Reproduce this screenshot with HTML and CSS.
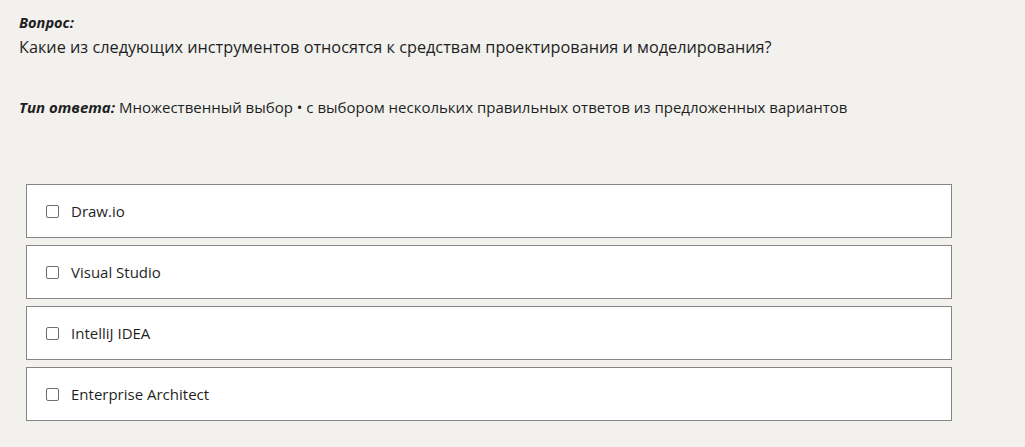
FILE: index.html
```html
<!DOCTYPE html>
<html lang="ru">
<head>
<meta charset="utf-8">
<link rel="stylesheet" href="styles.css">
</head>
<body>
<div class="page">
  <div class="label">Вопрос:</div>
  <div class="question">Какие из следующих инструментов относятся к средствам проектирования и моделирования?</div>
  <div class="type"><span class="type-label">Тип ответа:</span> Множественный выбор • с выбором нескольких правильных ответов из предложенных вариантов</div>
  <div class="options">
    <label class="option"><span class="box"></span><span class="opt-text">Draw.io</span></label>
    <label class="option"><span class="box"></span><span class="opt-text">Visual Studio</span></label>
    <label class="option"><span class="box"></span><span class="opt-text">IntelliJ IDEA</span></label>
    <label class="option"><span class="box"></span><span class="opt-text">Enterprise Architect</span></label>
  </div>
</div>
</body>
</html>
```
FILE: styles.css
```css
html, body {
  margin: 0;
  padding: 0;
  background: #f2f1ee;
}
body {
  font-family: "Open Sans", "Noto Sans", sans-serif;
  color: #1f1f1f;
}
.page {
  padding: 11px 19px 0 19px;
}
.label {
  font-weight: 700;
  font-style: italic;
  font-size: 14.6px;
  line-height: 22px;
}
.question {
  font-size: 16.25px;
  line-height: 26px;
  margin-top: 1px;
}
.type {
  font-size: 15px;
  line-height: 22px;
  margin-top: 36px;
}
.type-label {
  font-weight: 700;
  font-style: italic;
}
.options {
  margin: 66px 0 0 7px;
  width: 926px;
  display: flex;
  flex-direction: column;
  gap: 7px;
}
.option {
  display: flex;
  align-items: center;
  height: 54px;
  box-sizing: border-box;
  background: #fff;
  border: 1px solid #858585;
  padding-left: 19px;
}
.box {
  width: 13px;
  height: 13px;
  box-sizing: border-box;
  border: 1px solid #6e6e6e;
  border-radius: 2px;
  background: #fff;
  flex: none;
}
.opt-text {
  margin-left: 12px;
  font-size: 15px;
}
```
